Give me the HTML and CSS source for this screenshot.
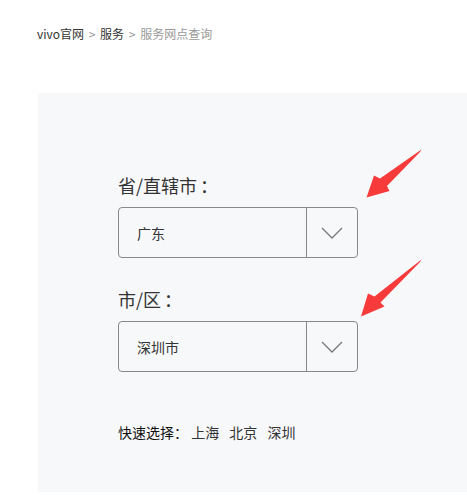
FILE: index.html
```html
<!DOCTYPE html>
<html lang="zh-CN">
<head>
  <meta charset="UTF-8" />
  <meta name="viewport" content="width=device-width, initial-scale=1.0" />
  <title>服务网点查询</title>
  <link rel="stylesheet" href="styles.css">
</head>
<body>
  <nav class="breadcrumb">
    <a href="#">vivo官网</a>
    <span class="sep">&gt;</span>
    <a href="#">服务</a>
    <span class="sep">&gt;</span>
    <span class="current">服务网点查询</span>
  </nav>

  <main class="panel">
    <div class="field">
      <div class="field-label">省/直辖市<span class="colon">：</span></div>
      <div class="select">
        <span class="select-value">广东</span>
        <span class="select-btn">
          <svg width="22" height="12" viewBox="0 0 22 12"><path d="M1 1 L11 11 L21 1" fill="none" stroke="#777" stroke-width="1.3"/></svg>
        </span>
      </div>
    </div>

    <div class="field">
      <div class="field-label">市/区<span class="colon">：</span></div>
      <div class="select">
        <span class="select-value">深圳市</span>
        <span class="select-btn">
          <svg width="22" height="12" viewBox="0 0 22 12"><path d="M1 1 L11 11 L21 1" fill="none" stroke="#777" stroke-width="1.3"/></svg>
        </span>
      </div>
    </div>

    <div class="quick">
      快速选择：
      <a href="#">上海</a>
      <a href="#">北京</a>
      <a href="#">深圳</a>
    </div>

    <!-- red pointers drawn over the panel -->
    <svg class="arrows" width="75" height="190" viewBox="355 140 75 190">
      <polygon fill="#f73b3b" points="421.5,149.5 380,178.5 374,175.5 366.5,197.5 389.5,191 387,186 420,152"/>
      <polygon fill="#f73b3b" points="421.5,259.5 374.5,296.5 368,293.5 361,316.5 384.5,306.5 380.5,302.5 420,262"/>
    </svg>
  </main>
</body>
</html>
```

FILE: styles.css
```css
body {
  margin: 0;
  font-family: "Noto Sans CJK SC", "Noto Sans", sans-serif;
  color: #333;
  background-color: #ffffff;
}
a {
  color: #333;
  text-decoration: none;
}
.breadcrumb {
  padding: 26px 0 0 37px;
  font-size: 12px;
  line-height: 16px;
  height: 16px;
}
.breadcrumb .sep {
  color: #999;
  margin: 0 2px;
}
.breadcrumb .current {
  color: #999;
}
.panel {
  position: relative;
  margin: 51px 0 0 38px;
  height: 399px;
  padding: 80px 0 0 80px;
  box-sizing: border-box;
  background-color: #f7f8fa;
}
.field {
  margin-bottom: 29px;
}
.field-label {
  font-size: 18px;
  line-height: 24px;
  color: #333;
  margin-bottom: 10px;
}
.colon {
  padding-left: 3px;
}
.select {
  display: flex;
  width: 240px;
  height: 51px;
  box-sizing: border-box;
  border: 1px solid #888;
  border-radius: 4px;
}
.select-value {
  flex: 1;
  display: flex;
  align-items: center;
  padding-left: 18px;
  font-size: 14px;
  color: #333;
}
.select-btn {
  width: 50px;
  border-left: 1px solid #888;
  display: flex;
  align-items: center;
  justify-content: center;
}
.quick {
  margin-top: 50px;
  font-size: 14px;
  line-height: 20px;
  color: #111;
}
.quick a {
  margin-right: 7px;
}
.arrows {
  position: absolute;
  left: 317px;
  top: 47px;
}
```
